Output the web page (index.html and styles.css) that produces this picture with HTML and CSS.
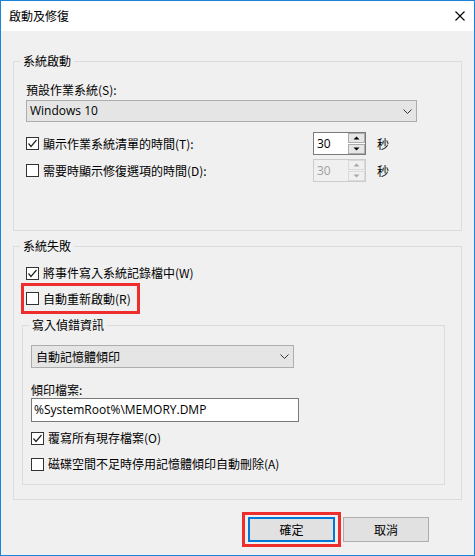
FILE: index.html
```html
<!DOCTYPE html>
<html lang="zh-Hant">
<head>
<meta charset="utf-8">
<title>啟動及修復</title>
<link rel="stylesheet" href="styles.css">
</head>
<body>
<div class="window">
  <div class="titlebar">
    <span class="title">啟動及修復</span>
    <svg class="close" width="10" height="10" viewBox="0 0 10 10"><path d="M0.5 0.5 L9.5 9.5 M9.5 0.5 L0.5 9.5" stroke="#000" stroke-width="1.1" fill="none"/></svg>
  </div>
  <div class="content">
    <section class="group g1">
      <div class="legend">系統啟動</div>
      <div class="label">預設作業系統(S):</div>
      <div class="combo combo-os">
        <span class="latin">Windows 10</span>
        <svg width="9" height="5" viewBox="0 0 9 5"><path d="M0.5 0.5 L4.5 4.5 L8.5 0.5" stroke="#333" stroke-width="1" fill="none"/></svg>
      </div>
      <div class="spinrow r1">
        <div class="check">
          <span class="box"><svg width="11" height="11" viewBox="0 0 11 11"><path d="M1.5 5.5 L4 8.5 L9.5 2" stroke="#222" stroke-width="1.2" fill="none"/></svg></span>
          <span>顯示作業系統清單的時間(T):</span>
        </div>
        <div class="spinner">
          <span class="spin-val">30</span>
          <span class="spin-btns">
            <span class="spin-btn"><svg width="7" height="4" viewBox="0 0 7 4"><path d="M0.5 3.5 L3.5 0.5 L6.5 3.5Z" fill="#000"/></svg></span>
            <span class="spin-btn"><svg width="7" height="4" viewBox="0 0 7 4"><path d="M0.5 0.5 L3.5 3.5 L6.5 0.5Z" fill="#000"/></svg></span>
          </span>
        </div>
        <span class="unit">秒</span>
      </div>
      <div class="spinrow r2">
        <div class="check">
          <span class="box"></span>
          <span>需要時顯示修復選項的時間(D):</span>
        </div>
        <div class="spinner disabled">
          <span class="spin-val">30</span>
          <span class="spin-btns">
            <span class="spin-btn"><svg width="7" height="4" viewBox="0 0 7 4"><path d="M0.5 3.5 L3.5 0.5 L6.5 3.5Z" fill="#a6a6a6"/></svg></span>
            <span class="spin-btn"><svg width="7" height="4" viewBox="0 0 7 4"><path d="M0.5 0.5 L3.5 3.5 L6.5 0.5Z" fill="#a6a6a6"/></svg></span>
          </span>
        </div>
        <span class="unit">秒</span>
      </div>
    </section>

    <section class="group g2">
      <div class="legend">系統失敗</div>
      <div class="check crow r3">
        <span class="box"><svg width="11" height="11" viewBox="0 0 11 11"><path d="M1.5 5.5 L4 8.5 L9.5 2" stroke="#222" stroke-width="1.2" fill="none"/></svg></span>
        <span>將事件寫入系統記錄檔中(W)</span>
      </div>
      <div class="mark mark-restart">
        <div class="check">
          <span class="box"></span>
          <span>自動重新啟動(R)</span>
        </div>
      </div>
      <section class="group sub">
        <div class="legend">寫入偵錯資訊</div>
        <div class="combo combo-dump">
          <span>自動記憶體傾印</span>
          <svg width="9" height="5" viewBox="0 0 9 5"><path d="M0.5 0.5 L4.5 4.5 L8.5 0.5" stroke="#333" stroke-width="1" fill="none"/></svg>
        </div>
        <div class="label">傾印檔案:</div>
        <div class="textbox latin">%SystemRoot%\MEMORY.DMP</div>
        <div class="check crow r5">
          <span class="box"><svg width="11" height="11" viewBox="0 0 11 11"><path d="M1.5 5.5 L4 8.5 L9.5 2" stroke="#222" stroke-width="1.2" fill="none"/></svg></span>
          <span>覆寫所有現存檔案(O)</span>
        </div>
        <div class="check crow r6">
          <span class="box"></span>
          <span>磁碟空間不足時停用記憶體傾印自動刪除(A)</span>
        </div>
      </section>
    </section>

    <div class="footer">
      <div class="mark mark-ok">
        <div class="btn btn-ok">確定</div>
      </div>
      <div class="btn btn-cancel">取消</div>
    </div>
  </div>
</div>
</body>
</html>
```

FILE: styles.css
```css
* { box-sizing: border-box; }

body {
  margin: 0;
  font-family: "Noto Sans CJK TC", "Noto Sans", sans-serif;
  font-size: 12px;
  line-height: 16px;
  color: #000;
  background: #fff;
}

.window {
  width: 475px;
  height: 556px;
  border: 1px solid #1c84d8;
  background: #f0f0f0;
  display: flex;
  flex-direction: column;
}

.titlebar {
  height: 30px;
  background: #fff;
  display: flex;
  align-items: center;
  justify-content: space-between;
  padding: 0 9px 0 8px;
  flex: none;
}

.title { line-height: 16px; }
.close { display: block; }

.content {
  padding: 30px 12px 0 12px;
}

.latin { font-family: "Open Sans", "Noto Sans", sans-serif; }

.group {
  border: 1px solid #dcdcdc;
}

.legend {
  width: fit-content;
  height: 14px;
  line-height: 14px;
  margin-top: -8px;
  padding: 0 3px;
  background: #f0f0f0;
}

.g1 { padding: 0 12px 48px 12px; }
.g1 > .legend { margin-left: -6px; }

.g2 { margin-top: 15px; padding: 0 15px 14px 7px; }
.g2 > .legend { margin-left: -1px; }

.sub {
  margin-top: 11px;
  margin-left: 1px;
  width: 423px;
  padding: 0 8px 10px 8px;
}
.sub > .legend { margin-left: -2px; }

.label { height: 16px; margin-top: 14px; }

.combo {
  background: #e5e5e5;
  border: 1px solid #adadad;
  display: flex;
  align-items: center;
  justify-content: space-between;
}
.combo svg { display: block; }

.combo-os {
  width: 391px;
  height: 22px;
  margin-top: 2px;
  padding: 0 4px 0 3px;
}

.combo-dump {
  width: 263px;
  height: 23px;
  margin-top: 13px;
  padding: 0 4px 0 4px;
}

.check {
  display: flex;
  align-items: center;
}

.box {
  width: 13px;
  height: 13px;
  border: 1px solid #333;
  background: #fff;
  margin-right: 4px;
  flex: none;
  display: flex;
  align-items: center;
  justify-content: center;
}
.box svg { display: block; }

.spinrow {
  display: grid;
  grid-template-columns: 287px 53px auto;
  align-items: center;
  height: 23px;
}
.r1 { margin-top: 10px; }
.r2 { margin-top: 4px; }

.unit { margin-left: 11px; }

.spinner {
  width: 53px;
  height: 23px;
  border: 1px solid #7a7a7a;
  background: #fff;
  display: flex;
}

.spin-val {
  flex: 1;
  padding-left: 3px;
  line-height: 21px;
  font-family: "Open Sans", "Noto Sans", sans-serif;
}

.spin-btns {
  width: 17px;
  display: flex;
  flex-direction: column;
  gap: 1px;
}

.spin-btn {
  flex: 1;
  background: #e6e6e6;
  border: 1px solid #adadad;
  display: flex;
  align-items: center;
  justify-content: center;
}
.spin-btn svg { display: block; }

.spinner.disabled {
  border-color: #cccccc;
  background: #f0f0f0;
}
.spinner.disabled .spin-val { color: #a0a0a0; }
.spinner.disabled .spin-btn {
  background: #f0f0f0;
  border-color: #dadada;
}

.crow { height: 20px; }
.r3 { margin-top: 10px; padding-left: 5px; }
.r5 { margin-top: 6px; }
.r6 { margin-top: 6px; }

.mark {
  border: 3px solid #ee2d2d;
}

.mark-restart {
  width: 119px;
  height: 31px;
  padding: 0 0 0 2px;
  display: flex;
  align-items: center;
}

.textbox {
  width: 268px;
  height: 24px;
  background: #fff;
  border: 1px solid #7a7a7a;
  padding-left: 2px;
  line-height: 22px;
}

.footer {
  margin-top: 12px;
  display: flex;
  justify-content: flex-end;
  align-items: center;
  padding-right: 33px;
}

.mark-ok {
  padding: 2px 3px;
}

.btn {
  height: 25px;
  background: #e1e1e1;
  display: flex;
  align-items: center;
  justify-content: center;
}

.btn-ok {
  width: 87px;
  border: 2px solid #0078d7;
}

.btn-cancel {
  width: 86px;
  margin-left: 2px;
  border: 1px solid #adadad;
}
```
